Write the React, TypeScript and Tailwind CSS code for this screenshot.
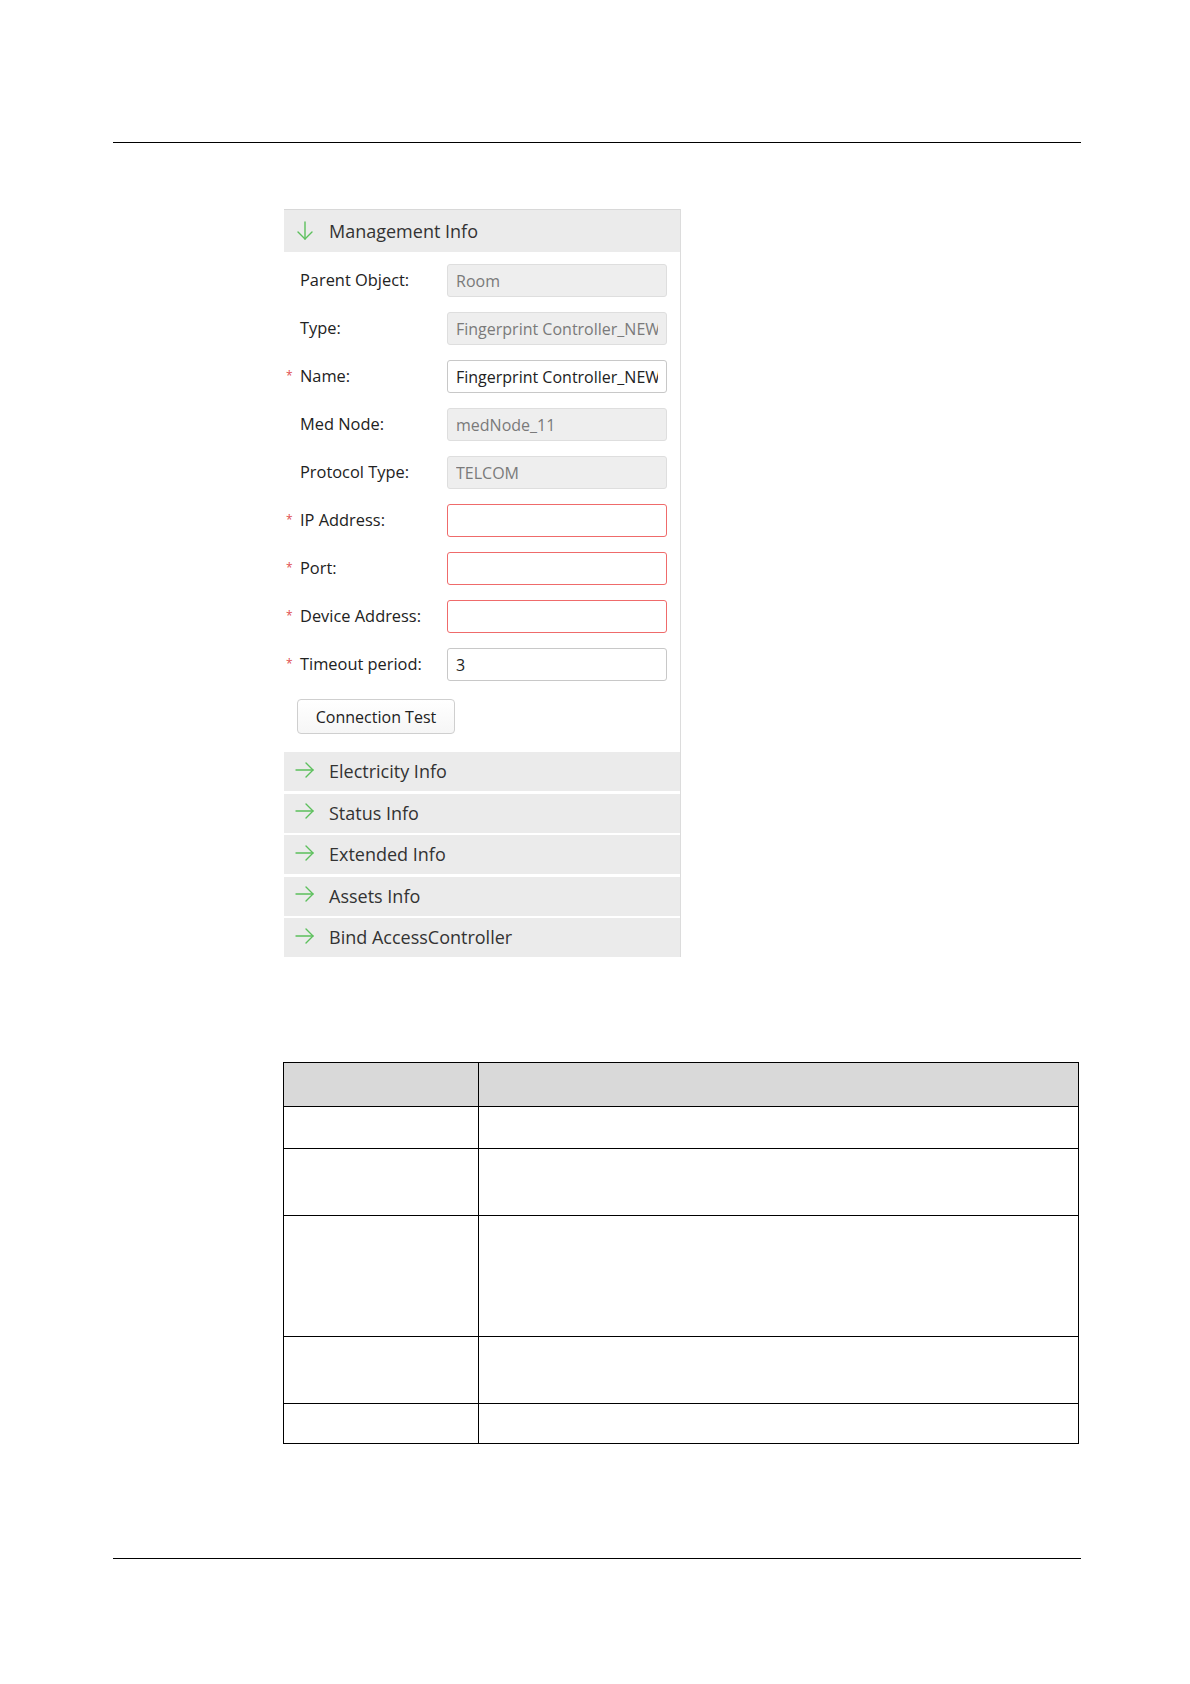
import React from "react";

const font = { fontFamily: '"Open Sans", "Noto Sans", Arial, sans-serif' };

function DownArrow() {
  return (
    <svg width="18" height="20" viewBox="0 0 18 20" fill="none" stroke="#5cc05c" strokeWidth="1.4" strokeLinecap="round" strokeLinejoin="round">
      <path d="M9 1 L9 18" />
      <path d="M2 11 L9 18 L16 11" />
    </svg>
  );
}

function RightArrow() {
  return (
    <svg width="20" height="18" viewBox="0 0 20 18" fill="none" stroke="#5cc05c" strokeWidth="1.4" strokeLinecap="round" strokeLinejoin="round">
      <path d="M1 9 L18 9" />
      <path d="M11 2 L18 9 L11 16" />
    </svg>
  );
}

type Field = {
  label: string;
  required?: boolean;
  value?: string;
  kind: "disabled" | "normal" | "error";
};

const fields: Field[] = [
  { label: "Parent Object:", value: "Room", kind: "disabled" },
  { label: "Type:", value: "Fingerprint Controller_NEW", kind: "disabled" },
  { label: "Name:", required: true, value: "Fingerprint Controller_NEW", kind: "normal" },
  { label: "Med Node:", value: "medNode_11", kind: "disabled" },
  { label: "Protocol Type:", value: "TELCOM", kind: "disabled" },
  { label: "IP Address:", required: true, kind: "error" },
  { label: "Port:", required: true, kind: "error" },
  { label: "Device Address:", required: true, kind: "error" },
  { label: "Timeout period:", required: true, value: "3", kind: "normal" },
];

const sections = ["Electricity Info", "Status Info", "Extended Info", "Assets Info", "Bind AccessController"];

const rows = [43, 42, 67, 121, 67, 40];

export default function App() {
  return (
    <div className="w-[1190px] h-[1684px] bg-white flex flex-col" style={font}>
      <div className="mt-[142px] ml-[113px] w-[968px] border-t-[1.5px] border-black" />

      <div className="ml-[284px] mt-[66px] w-[397px] border-r border-[#dcdcdc] flex flex-col">
        <div className="h-[43px] bg-[#ebebeb] border-t border-[#d8d8d8] flex items-center">
          <div className="ml-[10px] w-[22px] flex items-center justify-center">
            <DownArrow />
          </div>
          <span className="ml-[13px] text-[18px] text-[#333]">Management Info</span>
        </div>

        <div className="pt-[12px] flex flex-col gap-[15px]">
          {fields.map((f) => (
            <div key={f.label} className="flex items-center h-[33px]">
              <div className="w-[163px] flex items-center text-[16.4px] text-[#222]">
                <span className="w-[16px] pl-[2px] text-[#e05050] text-[12px] leading-none self-start mt-[6px]">
                  {f.required ? "*" : ""}
                </span>
                <span>{f.label}</span>
              </div>
              <div
                className={
                  f.kind === "disabled"
                    ? "w-[220px] h-[33px] rounded-[3px] border border-[#dedede] bg-[#eeeeee] flex items-center px-[8px] text-[16px] text-[#7a7a7a]"
                    : f.kind === "error"
                    ? "w-[220px] h-[33px] rounded-[3px] border border-[#ef6b6b] bg-white flex items-center px-[8px] text-[16px] text-[#222]"
                    : "w-[220px] h-[33px] rounded-[3px] border border-[#c8c8c8] bg-white flex items-center px-[8px] text-[16px] text-[#222]"
                }
              >
                <div className="flex-1 overflow-hidden whitespace-nowrap">{f.value ?? ""}</div>
              </div>
            </div>
          ))}
        </div>

        <div className="mt-[18px] ml-[13px]">
          <div className="w-[158px] h-[35px] rounded-[4px] border border-[#cfcfcf] bg-gradient-to-b from-white to-[#f6f6f6] flex items-center justify-center text-[16px] text-[#222]">
            Connection Test
          </div>
        </div>

        <div className="mt-[18px] flex flex-col gap-[2.5px]">
          {sections.map((s) => (
            <div key={s} className="h-[39px] bg-[#ebebeb] flex items-center">
              <div className="ml-[10px] w-[22px] flex items-center justify-center -mt-[4px]">
                <RightArrow />
              </div>
              <span className="ml-[13px] text-[18px] text-[#333]">{s}</span>
            </div>
          ))}
        </div>
      </div>

      <div className="ml-[283px] mt-[105px] w-[796px] border-[1.5px] border-black flex flex-col">
        {rows.map((h, i) => (
          <div
            key={i}
            className={
              i === 0
                ? "flex bg-[#d9d9d9]"
                : "flex bg-white border-t-[1.5px] border-black"
            }
            style={{ height: h }}
          >
            <div className="w-[195px] border-r-[1.5px] border-black" />
            <div className="flex-1" />
          </div>
        ))}
      </div>

      <div className="mt-[114px] ml-[113px] w-[968px] border-t-[1.5px] border-black" />
    </div>
  );
}
